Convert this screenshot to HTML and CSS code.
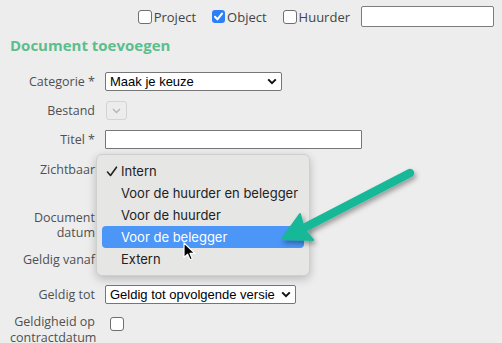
FILE: index.html
```html
<!DOCTYPE html>
<html>
<head>
    <title>Document toevoegen</title>
    <link rel="stylesheet" href="styles.css">
</head>
<body>
    <div class="topbar">
        <label class="check-label"><span class="checkbox"></span>Project</label>
        <label class="check-label"><span class="checkbox checked"><svg width="13" height="13" viewBox="0 0 13 13"><path d="M3 6.8 L5.4 9.4 L10 3.6" fill="none" stroke="#fff" stroke-width="2" stroke-linecap="round" stroke-linejoin="round"/></svg></span>Object</label>
        <label class="check-label"><span class="checkbox"></span>Huurder</label>
        <div class="search-input"></div>
    </div>

    <h1>Document toevoegen</h1>

    <div class="form">
        <div class="row">
            <div class="label">Categorie *</div>
            <div class="select select-category">
                <span>Maak je keuze</span>
                <svg width="10" height="7" viewBox="0 0 10 7"><path d="M1.2 1.4 L5 5.2 L8.8 1.4" fill="none" stroke="#111" stroke-width="2"/></svg>
            </div>
        </div>

        <div class="row">
            <div class="label">Bestand</div>
            <div class="file-select">
                <svg width="9" height="6" viewBox="0 0 9 6"><path d="M1 1 L4.5 4.5 L8 1" fill="none" stroke="#b5b5b5" stroke-width="1.4"/></svg>
            </div>
        </div>

        <div class="row">
            <div class="label">Titel *</div>
            <div class="text-input"></div>
        </div>

        <div class="row row-top row-visible">
            <div class="label">Zichtbaar</div>
            <div class="field">
                <!-- open dropdown of the Zichtbaar select -->
                <div class="popup">
                    <div class="option"><svg class="tick" width="12" height="11" viewBox="0 0 12 11"><path d="M1.5 6 L4.5 9.5 L10.5 1.2" fill="none" stroke="#222" stroke-width="1.6" stroke-linecap="round" stroke-linejoin="round"/></svg>Intern</div>
                    <div class="option">Voor de huurder en belegger</div>
                    <div class="option">Voor de huurder</div>
                    <div class="option active">Voor de belegger</div>
                    <div class="option">Extern</div>
                    <svg class="cursor" width="14" height="20" viewBox="0 0 14 20">
                        <path d="M1 1 L1 15.5 L4.6 12.2 L7 17.8 L9.3 16.8 L7 11.4 L11.8 11.4 Z" fill="#000" stroke="#fff" stroke-width="1.2" stroke-linejoin="round"/>
                    </svg>
                </div>
            </div>
        </div>

        <div class="row row-top">
            <div class="label">Document<br>datum</div>
        </div>

        <div class="row row-from">
            <div class="label">Geldig vanaf</div>
        </div>

        <div class="row">
            <div class="label">Geldig tot</div>
            <div class="select select-until">
                <span>Geldig tot opvolgende versie</span>
                <svg width="10" height="7" viewBox="0 0 10 7"><path d="M1.2 1.4 L5 5.2 L8.8 1.4" fill="none" stroke="#111" stroke-width="2"/></svg>
            </div>
        </div>

        <div class="row row-top">
            <div class="label label-tall">Geldigheid op<br>contractdatum</div>
            <span class="checkbox checkbox-form"></span>
        </div>
    </div>

    <svg class="pointer-arrow" width="502" height="343" viewBox="0 0 502 343">
        <defs>
            <filter id="shadow" x="-20%" y="-20%" width="140%" height="140%">
                <feDropShadow dx="2" dy="3" stdDeviation="2.5" flood-color="#000" flood-opacity="0.35"/>
            </filter>
        </defs>
        <g filter="url(#shadow)" fill="#17b897" stroke="#17b897">
            <line x1="410" y1="173" x2="302" y2="229" stroke-width="8.5" stroke-linecap="round"/>
            <polygon points="282,239 300,214 304,229 313,240" stroke-width="2" stroke-linejoin="round"/>
        </g>
    </svg>
</body>
</html>
```

FILE: styles.css
```css
body {
    margin: 0;
    padding: 6px 8px 0 10px;
    background-color: #ededed;
    font-family: "Open Sans", "Noto Sans", sans-serif;
    color: #4a4a4a;
    height: 337px;
    overflow: hidden;
    position: relative;
}

.topbar {
    display: flex;
    justify-content: flex-end;
    align-items: center;
    height: 21px;
    font-size: 13px;
    color: #444;
}

.check-label {
    display: flex;
    align-items: center;
    margin-right: 4px;
}

.check-label + .check-label {
    margin-left: 12px;
}

.checkbox {
    display: inline-block;
    width: 12px;
    height: 12px;
    border: 1px solid #6f6f6f;
    border-radius: 3px;
    background-color: #fff;
    margin-right: 2px;
    box-sizing: content-box;
}

.checkbox.checked {
    width: 13px;
    height: 13px;
    border: none;
    background-color: #2d7ff6;
}

.checkbox.checked svg {
    display: block;
}

.search-input {
    width: 131px;
    height: 19px;
    margin-left: 7px;
    background-color: #fff;
    border: 1px solid #7c7c7c;
    border-radius: 2px;
}

h1 {
    margin: 8px 0 17px;
    font-size: 15px;
    line-height: 20px;
    font-weight: 700;
    color: #5cbd8d;
}

.row {
    display: flex;
    align-items: center;
    min-height: 19px;
    margin-bottom: 10px;
}

.row-top {
    align-items: flex-start;
}

.row-visible {
    height: 41px;
}

.row-visible .label {
    padding-top: 3px;
}

.row-from {
    margin-bottom: 16px;
}

.label {
    width: 85px;
    margin-right: 10px;
    text-align: right;
    font-size: 12.5px;
    line-height: 15px;
    color: #505050;
    flex-shrink: 0;
}

.label-tall {
    line-height: 16px;
}

.field {
    position: relative;
}

.select {
    display: flex;
    align-items: center;
    justify-content: space-between;
    height: 17px;
    padding: 0 4px 0 4px;
    background-color: #fff;
    border: 1px solid #767676;
    border-radius: 2px;
    font-family: "Liberation Sans", Arial, sans-serif;
    font-size: 13px;
    color: #000;
}

.select-category {
    width: 167px;
}

.select-until {
    width: 181px;
}

.file-select {
    display: flex;
    align-items: center;
    justify-content: center;
    width: 19px;
    height: 17px;
    margin-left: 1px;
    border: 1px solid #d3d3d3;
    border-radius: 3px;
    background-color: #ececec;
}

.text-input {
    width: 255px;
    height: 17px;
    background-color: #fff;
    border: 1px solid #767676;
    border-radius: 1px;
}

.popup {
    position: absolute;
    left: -9px;
    top: -5px;
    width: 202px;
    padding: 5px 5px 5px 5px;
    background-color: #e6e6e5;
    border: 1px solid #cfcfcf;
    border-radius: 6px;
    box-shadow: 0 3px 10px rgba(0, 0, 0, 0.22);
    font-family: Inter, "Noto Sans", sans-serif;
    font-size: 13px;
    color: #222;
    z-index: 2;
}

.option {
    position: relative;
    height: 22px;
    line-height: 22px;
    padding-left: 19px;
    border-radius: 4px;
    white-space: nowrap;
}

.option.active {
    background-color: #4b96f7;
    color: #fff;
}

.tick {
    position: absolute;
    left: 4px;
    top: 6px;
}

.cursor {
    position: absolute;
    left: 86px;
    top: 87px;
}

.checkbox-form {
    margin: 3px 0 0 5px;
}

.pointer-arrow {
    position: absolute;
    left: 0;
    top: 0;
    pointer-events: none;
    z-index: 3;
}
```
